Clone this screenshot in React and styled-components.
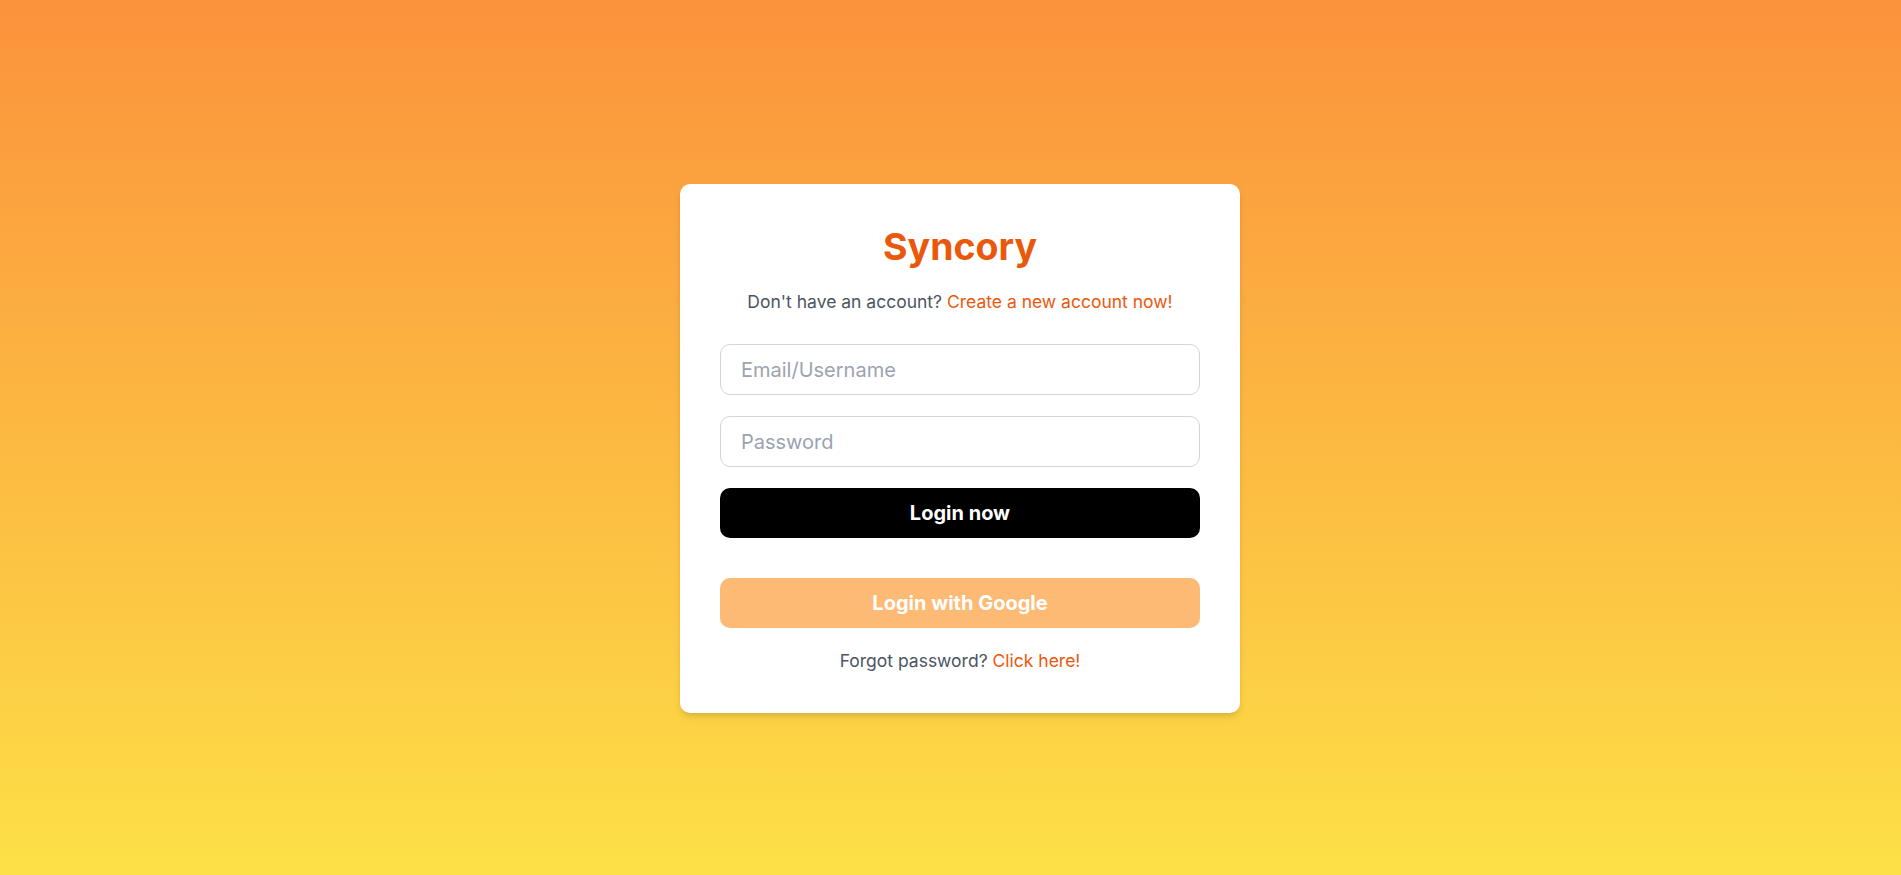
import React from 'react'
// styling
import styled, { createGlobalStyle } from 'styled-components'

const GlobalStyle = createGlobalStyle`
  * {
    box-sizing: border-box;
  }
  body {
    margin: 0;
    font-family: Inter, 'Noto Sans', 'Liberation Sans', sans-serif;
  }
`

const LoginPage = () => {
  return (
    <>
      <GlobalStyle />
      <Page>
        <Card>
          <Title>Syncory</Title>
          <Note top='20px'>
            Don't have an account? <Link href='#'>Create a new account now!</Link>
          </Note>
          <Form onSubmit={(e) => e.preventDefault()}>
            <Input type='text' placeholder='Email/Username' />
            <Input type='password' placeholder='Password' />
            <Button type='submit' variant='dark'>
              Login now
            </Button>
          </Form>
          <Button type='button' variant='google'>
            Login with Google
          </Button>
          <Note top='20px'>
            Forgot password? <Link href='#'>Click here!</Link>
          </Note>
        </Card>
      </Page>
    </>
  )
}

const Page = styled.main`
  min-height: 875px;
  display: flex;
  justify-content: center;
  align-items: flex-start;
  padding: 184px 0 0 19px;
  background: linear-gradient(to bottom, #fb923c, #fde047);
`
const Card = styled.div`
  width: 560px;
  padding: 40px;
  background-color: #ffffff;
  border-radius: 10px;
  box-shadow: 0 5px 8px -1px rgba(0, 0, 0, 0.1), 0 2px 5px -2px rgba(0, 0, 0, 0.1);
  text-align: center;
`
const Title = styled.h1`
  margin: 0;
  font-size: 37.5px;
  line-height: 45px;
  font-weight: 700;
  color: #ea580c;
`
const Note = styled.p`
  margin: ${(props) => props.top} 0 0;
  font-size: 17.5px;
  line-height: 25px;
  color: #4b5563;
`
const Link = styled.a`
  color: #ea580c;
  text-decoration: none;
`
const Form = styled.form`
  display: flex;
  flex-direction: column;
  gap: 21px;
  margin: 30px 0 40px;
`
const Input = styled.input`
  width: 100%;
  height: 51px;
  padding: 0 20px;
  border: 1px solid #d1d5db;
  border-radius: 10px;
  font-family: inherit;
  font-size: 20px;
  color: #111827;
  outline: none;
  &::placeholder {
    color: #9ca3af;
  }
`
const Button = styled.button`
  width: 100%;
  height: 50px;
  border: none;
  border-radius: 10px;
  font-family: inherit;
  font-size: 20px;
  font-weight: 700;
  color: #ffffff;
  cursor: pointer;
  background-color: ${(props) => (props.variant === 'google' ? '#fdba74' : '#000000')};
`

export default LoginPage
